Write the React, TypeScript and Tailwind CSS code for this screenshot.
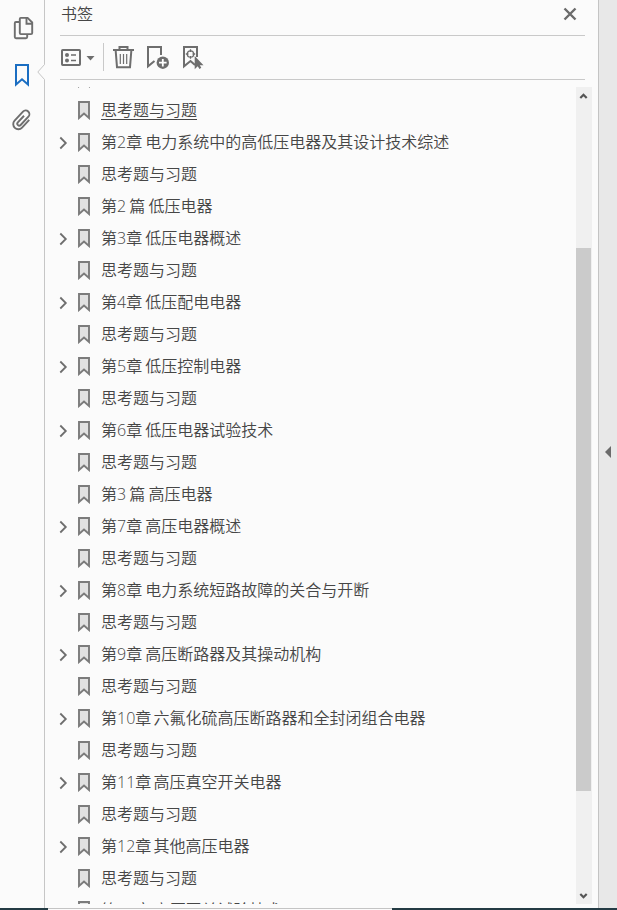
import React from "react";

type Row = { t: string; chapter?: boolean; active?: boolean };

const Q = "思考题与习题";
const rows: Row[] = [
  { t: "" },
  { t: Q, active: true },
  { t: "第2章 电力系统中的高低压电器及其设计技术综述", chapter: true },
  { t: Q },
  { t: "第2 篇 低压电器" },
  { t: "第3章 低压电器概述", chapter: true },
  { t: Q },
  { t: "第4章 低压配电电器", chapter: true },
  { t: Q },
  { t: "第5章 低压控制电器", chapter: true },
  { t: Q },
  { t: "第6章 低压电器试验技术", chapter: true },
  { t: Q },
  { t: "第3 篇 高压电器" },
  { t: "第7章 高压电器概述", chapter: true },
  { t: Q },
  { t: "第8章 电力系统短路故障的关合与开断", chapter: true },
  { t: Q },
  { t: "第9章 高压断路器及其操动机构", chapter: true },
  { t: Q },
  { t: "第10章 六氟化硫高压断路器和全封闭组合电器", chapter: true },
  { t: Q },
  { t: "第11章 高压真空开关电器", chapter: true },
  { t: Q },
  { t: "第12章 其他高压电器", chapter: true },
  { t: Q },
  { t: "第13章 高压开关试验技术", chapter: true },
];

function Bookmark() {
  return (
    <svg width="12" height="20" viewBox="0 0 12 20" className="block shrink-0">
      <path d="M1 2H11V18L6 13.6L1 18Z" fill="#e1e1e1" stroke="#7b7b7b" strokeWidth="1.9" />
    </svg>
  );
}

function Rail() {
  return (
    <nav className="flex w-[45px] shrink-0 flex-col border-r border-[#c6c6c6]">
      <svg width="44" height="140" viewBox="0 0 44 140" fill="none" stroke="#6e6e6e" strokeWidth="1.9">
        <path d="M19 22H16Q14.8 22 14.8 23.2V37Q14.8 38.2 16 38.2H26Q27.2 38.2 27.2 37V34" />
        <path d="M20.8 17.9H27.6L32.2 22.5V32.9Q32.2 34.1 31 34.1H20.8Q19.8 34.1 19.8 33V19Q19.8 17.9 20.8 17.9Z" />
        <path d="M26.5 18V23.8H32" />
        <path d="M16 65H28V84.5L22 79.3L16 84.5Z" stroke="#1b6ec2" strokeWidth="2" />
        <path
          transform="translate(22 120) rotate(43)"
          d="M5.2 -5V5.5A5.1 5.1 0 0 1 -5 5.5V-6.8A3.7 3.7 0 0 1 2.4 -6.8V4.6A1.9 1.9 0 0 1 -1.4 4.6V-4.5"
        />
      </svg>
    </nav>
  );
}

function Toolbar() {
  return (
    <svg width="150" height="43" viewBox="60 36 150 43" fill="none" stroke="#6e6e6e" className="block">
      <rect x="62" y="50" width="18" height="15" rx=".7" strokeWidth="2" />
      <circle cx="67" cy="55" r="2" fill="#6e6e6e" stroke="none" />
      <circle cx="67" cy="60.5" r="2" fill="#6e6e6e" stroke="none" />
      <path d="M71 55H76M71 60.5H76" strokeWidth="1.5" />
      <path d="M86.5 56H94.5L90.5 60.5Z" fill="#6e6e6e" stroke="none" />
      <path d="M103.5 43V71" stroke="#c9c9c9" />
      <path d="M113 50H134M119.5 50V47H127.5V50M115.7 51L117 67.2H130L131.3 51" strokeWidth="2" />
      <path d="M120.3 54V64M123.5 54V64M126.7 54V64" strokeWidth="1.2" />
      <path d="M161 55V47H148V66.3L154.5 61" strokeWidth="2" />
      <circle cx="162.8" cy="62.7" r="6.2" fill="#6e6e6e" stroke="none" />
      <path d="M159 62.7H166.6M162.8 58.9V66.5" stroke="#fff" strokeWidth="1.8" />
      <path d="M197 57V47H184V66.3L190.5 61L195 65" strokeWidth="2" />
      <circle cx="190.5" cy="54" r="3.2" strokeWidth="1.3" />
      <path d="M190.5 49.2V52M190.5 56V58.8M185.8 54H188.5M192.5 54H195.2" strokeWidth="1.3" />
      <path d="M194.7 56V69.3L197.7 66.2L199.5 68.9L201.3 67.8L199.8 65.2H203.5Z" fill="#6e6e6e" stroke="none" />
    </svg>
  );
}

export default function App() {
  return (
    <div className="flex h-[910px] w-[617px] flex-col overflow-hidden bg-[#fbfbfb] font-['Open_Sans','Noto_Sans_CJK_SC',sans-serif] text-[16px] text-[#464646]">
      <div className="flex h-[908px] shrink-0">
        <div className="relative flex">
          <Rail />
          <svg width="9" height="16" viewBox="0 0 9 16" className="absolute top-[64px] left-[37px]">
            <path d="M7.5 .5L.8 8L7.5 15.5H9V.5Z" fill="#fbfbfb" />
            <path d="M7.5 .5L.8 8L7.5 15.5" fill="none" stroke="#c6c6c6" />
          </svg>
        </div>
        <main className="flex w-[553px] shrink-0 flex-col pl-[15px]">
          <header className="flex h-9 w-[525px] items-center justify-between border-b border-[#c9c9c9] pr-[8px] pb-[7px]">
            <h1 className="pl-px font-[350]">书签</h1>
            <svg width="14" height="14" viewBox="0 0 14 14">
              <path d="M1.5 1.5L12.5 12.5M12.5 1.5L1.5 12.5" stroke="#6b6b6b" strokeWidth="2.4" />
            </svg>
          </header>
          <div className="h-11 w-[525px] border-b border-[#c9c9c9]">
            <Toolbar />
          </div>
          <div className="mt-[7px] flex h-[817px]">
            <ul className="-ml-px w-[517px] overflow-hidden">
              {rows.map((r, i) => (
                <li key={i} className={`flex h-8 items-center ${i === 0 ? "-mt-[25px]" : ""}`}>
                  <span className="w-[19px] shrink-0">
                    {r.chapter && (
                      <svg width="9" height="14" viewBox="0 0 9 14" className="mt-px block">
                        <path d="M1.3 1.5L6.8 7L1.3 12.5" fill="none" stroke="#6e6e6e" strokeWidth="1.8" />
                      </svg>
                    )}
                  </span>
                  <Bookmark />
                  <span
                    className={`ml-[11px] whitespace-nowrap leading-5 font-[350] ${
                      /第\d\d/.test(r.t) ? "[word-spacing:-2px]" : "[word-spacing:-1px]"
                    } ${r.active ? "underline decoration-1 underline-offset-[3px]" : ""}`}
                  >
                    {r.t}
                  </span>
                </li>
              ))}
            </ul>
            <div className="flex w-4 flex-col bg-[#f0f0f0]">
              <svg width="16" height="18" viewBox="0 0 16 18" className="block shrink-0">
                <path d="M4.3 11L7.5 7.8L10.7 11" fill="none" stroke="#555" strokeWidth="2.2" />
              </svg>
              <div className="mt-[143px] h-[543px] w-[15px] bg-[#cbcbcb]" />
              <svg width="16" height="18" viewBox="0 0 16 18" className="mt-auto block shrink-0">
                <path d="M4.3 8L7.5 11.2L10.7 8" fill="none" stroke="#555" strokeWidth="2.2" />
              </svg>
            </div>
          </div>
        </main>
        <aside className="flex flex-1 items-center border-l border-[#c4c4c4] bg-[#e8e8e8] pl-[6px]">
          <svg width="6" height="12" viewBox="0 0 6 12" className="-mt-[5px]">
            <path d="M6 0V12L0 6Z" fill="#6b6b6b" />
          </svg>
        </aside>
      </div>
      <footer className="flex h-[2px]">
        <div className="w-12 bg-[#243b44]" />
        <div className="w-[344px] border-t border-[#c4c4c4]" />
        <div className="flex-1 bg-[#243b44]" />
      </footer>
    </div>
  );
}
